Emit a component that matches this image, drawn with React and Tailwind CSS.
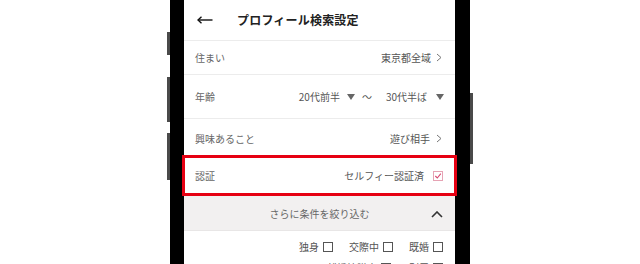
import React from "react";

const Chevron = () => (
  <svg width="6" height="9" viewBox="0 0 6 9" className="shrink-0">
    <path d="M1 1 L5 4.5 L1 8" fill="none" stroke="#777" strokeWidth="1" />
  </svg>
);

const Caret = () => (
  <svg width="8" height="6" viewBox="0 0 8 6" className="shrink-0">
    <path d="M0 0 H8 L4 6 Z" fill="#666" />
  </svg>
);

const Box = ({ checked }) =>
  checked ? (
    <svg width="10" height="10" viewBox="0 0 10 10" className="shrink-0">
      <rect x="0.5" y="0.5" width="9" height="9" fill="#fff" stroke="#e6a3b4" />
      <path d="M2.3 5 L4.3 7 L7.8 2.6" fill="none" stroke="#d84a72" strokeWidth="1.1" />
    </svg>
  ) : (
    <span className="block w-[10px] h-[10px] border border-[#555] bg-white shrink-0" />
  );

const Row = ({ label, children, className = "" }) => (
  <div className={`flex items-center justify-between pl-[11px] border-b border-[#ececec] ${className}`}>
    <span className="text-[10px] text-[#666]">{label}</span>
    <div className="flex items-center text-[10px] text-[#555]">{children}</div>
  </div>
);

const Check = ({ label }) => (
  <div className="flex items-center gap-[4px]">
    <span>{label}</span>
    <Box />
  </div>
);

export default function App() {
  return (
    <div
      className="w-[640px] h-[264px] bg-white overflow-hidden flex justify-center"
      style={{ fontFamily: '"Noto Sans CJK JP", "Noto Sans", sans-serif' }}
    >
      {/* left side buttons */}
      <div className="w-[3px] flex flex-col">
        <span className="block mt-[32px] h-[23px] bg-[#4a4a4a]" />
        <span className="block mt-[22px] h-[45px] bg-[#4a4a4a]" />
        <span className="block mt-[11px] h-[47px] bg-[#4a4a4a]" />
      </div>

      {/* phone body */}
      <div className="bg-black pl-[14px] pr-[15px] h-full">
        <div className="w-[271px] h-full bg-white flex flex-col">
          {/* header */}
          <div className="h-[41px] shrink-0 flex items-center border-b border-[#ececec]">
            <svg width="16" height="8" viewBox="0 0 16 8" className="ml-[13px] shrink-0">
              <path d="M1 4 H15.5" stroke="#111" strokeWidth="1.4" />
              <path d="M4.5 0.8 L1 4 L4.5 7.2" fill="none" stroke="#111" strokeWidth="1.4" />
            </svg>
            <span className="ml-[24px] text-[12px] font-bold text-[#222] tracking-[0.2px]">
              プロフィール検索設定
            </span>
          </div>

          <Row label="住まい" className="h-[34px] shrink-0 pr-[13px]">
            <span className="mr-[5px]">東京都全域</span>
            <Chevron />
          </Row>

          <Row label="年齢" className="h-[44px] shrink-0 pr-[11px]">
            <span>20代前半</span>
            <span className="ml-[7px]"><Caret /></span>
            <span className="ml-[7px] mr-[14px]">〜</span>
            <span>30代半ば</span>
            <span className="ml-[9px]"><Caret /></span>
          </Row>

          <Row label="興味あること" className="h-[36px] shrink-0 pr-[13px] pt-[3px] border-b-0">
            <span className="mr-[6px]">遊び相手</span>
            <Chevron />
          </Row>

          {/* highlighted row */}
          <div className="relative z-10 -mx-[2px] h-[41px] shrink-0 flex items-center justify-between border-[3px] border-[#e60012] bg-white pl-[10px] pr-[11px]">
            <span className="text-[10px] text-[#666]">認証</span>
            <div className="flex items-center gap-[9px] text-[10px] text-[#555]">
              <span>セルフィー認証済</span>
              <Box checked />
            </div>
          </div>

          {/* more filters */}
          <div className="h-[35px] shrink-0 relative flex items-center justify-center bg-[#f2f0f0] border-b border-[#e8e6e6]">
            <span className="text-[10px] text-[#666]">さらに条件を絞り込む</span>
            <svg width="12" height="7" viewBox="0 0 12 7" className="absolute right-[12px] top-[15px]">
              <path d="M1 6 L6 1 L11 6" fill="none" stroke="#333" strokeWidth="1.6" />
            </svg>
          </div>

          <div className="flex flex-col items-end pr-[12px] pt-[8px] gap-[6px] text-[10px] text-[#555]">
            <div className="flex items-center gap-[16px]">
              <Check label="独身" />
              <Check label="交際中" />
              <Check label="既婚" />
            </div>
            <div className="flex items-center gap-[18px]">
              <Check label="離婚協議中" />
              <Check label="別居" />
            </div>
          </div>
        </div>
      </div>

      {/* right side button */}
      <div className="w-[3px] flex flex-col">
        <span className="block mt-[93px] h-[71px] bg-[#4a4a4a]" />
      </div>
    </div>
  );
}
